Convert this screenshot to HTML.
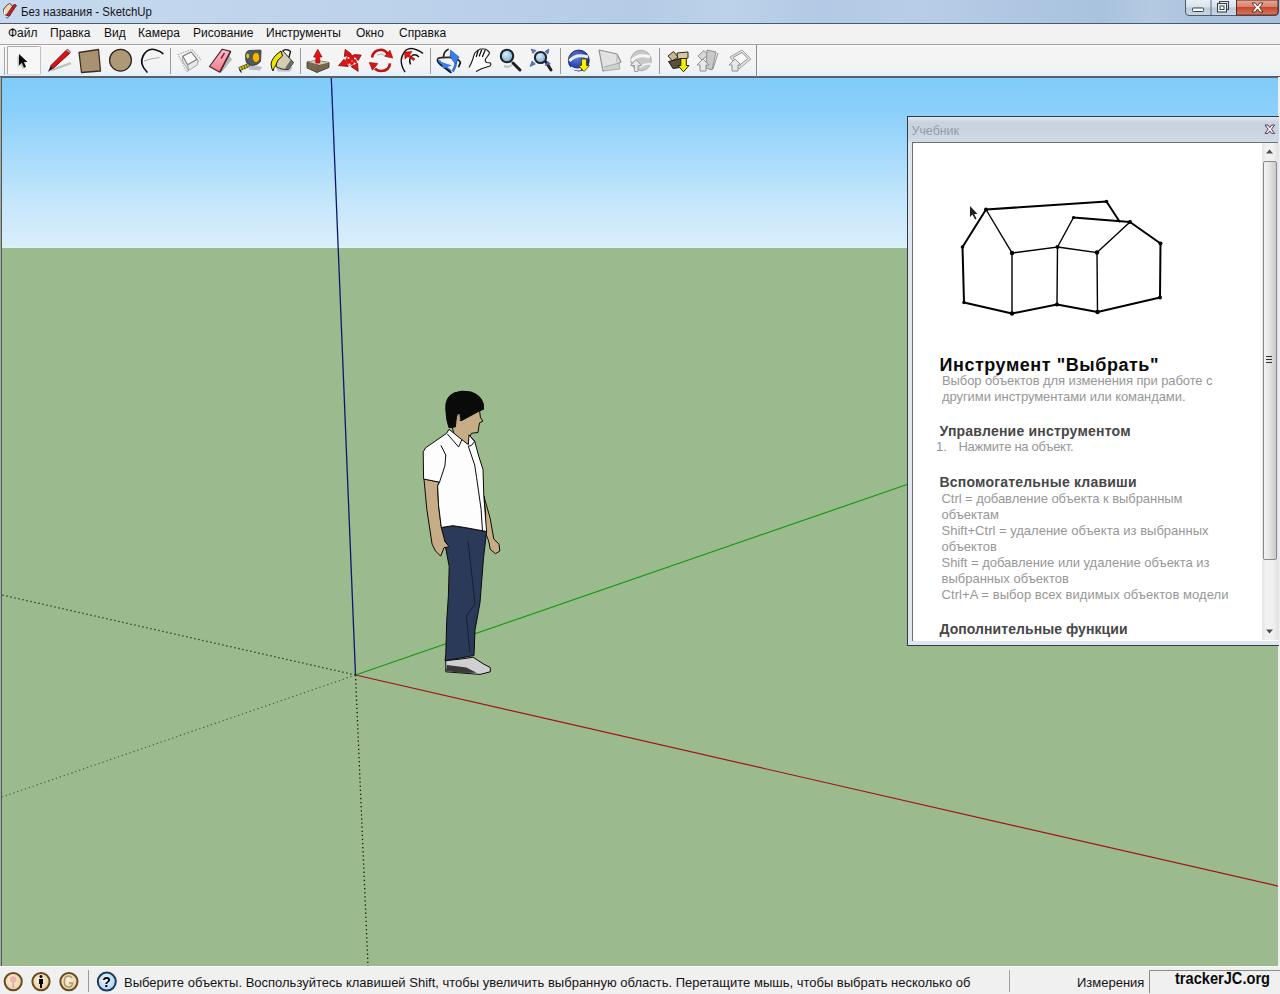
<!DOCTYPE html>
<html><head><meta charset="utf-8">
<style>
*{margin:0;padding:0;box-sizing:border-box}
html,body{width:1280px;height:994px;overflow:hidden;background:#f0f0f0;font-family:"Liberation Sans",sans-serif}
.abs{position:absolute}
svg{position:absolute;left:0;top:0;overflow:visible}
#title{left:0;top:0;width:1280px;height:24px;background:linear-gradient(90deg,#c6d9ee 0%,#c0d5ec 20%,#bad0ea 38%,#b4cce6 50%,#bcd2ea 57%,#b2cae5 64%,#b8cee8 72%,#aec6e2 80%,#a9c2de 86%,#b4cae2 90%,#aac2de 94%,#a8c0dc 100%);border-bottom:1px solid #4e5866}
#menu{left:0;top:24px;width:1280px;height:21px;background:#f2f2f2;border-bottom:1px solid #a3a3a3}
#menu span{position:absolute;top:2px;font-size:12px;color:#101010;white-space:nowrap}
#tb{left:0;top:45px;width:1280px;height:31px;background:linear-gradient(#fdfdfd 0px,#f4f4f4 2px,#f4f4f4 21px,#eef3f7 23px,#eef3f7 26px,#e6f1fa 28px,#e6f1fa 30px,#f2ede9 31px)}
#vpb{left:0;top:76px;width:1280px;height:891px;background:#56606c}
#sky{left:2px;top:78px;width:1276px;height:170px;background:linear-gradient(#7fcbfa 0%,#8bd0fb 20%,#a6dafb 45%,#c4e6fb 72%,#d4ecfb 92%,#d8eefa 98%,#dff4f6 100%)}
#ground{left:2px;top:248px;width:1276px;height:718px;background:#9bbb8e}
#vpl{left:0;top:77px;width:2px;height:890px;background:linear-gradient(90deg,#a4aaa4 0,#a4aaa4 1px,#505850 1px)}
#vpr{left:1278px;top:77px;width:2px;height:890px;background:#eef0f0}
#status{left:0;top:966px;width:1280px;height:28px;background:#f0f0f0;border-top:1px solid #fbfbfb}
#status .t{position:absolute;top:8px;font-size:13px;color:#141414;white-space:nowrap}
#panel{left:907px;top:116px;width:372px;height:530px;background:#cfd8e2;border:1px solid #34404c}
</style></head><body>
<div id="title" class="abs"></div>
<div id="menu" class="abs">
<span style="left:8px">Файл</span><span style="left:50px">Правка</span><span style="left:104px">Вид</span><span style="left:138px">Камера</span><span style="left:193px">Рисование</span><span style="left:266px">Инструменты</span><span style="left:356px">Окно</span><span style="left:399px">Справка</span>
</div>
<div id="tb" class="abs"></div>
<div id="vpb" class="abs"></div>
<div id="sky" class="abs"></div>
<div id="ground" class="abs"></div>
<div id="vpl" class="abs"></div>
<div id="vpr" class="abs"></div>
<div id="status" class="abs">
<span class="t" style="left:124px">Выберите объекты. Воспользуйтесь клавишей Shift, чтобы увеличить выбранную область. Перетащите мышь, чтобы выбрать несколько об</span>
<span class="t" style="left:1077px">Измерения</span>
</div>
<svg width="1280" height="80" viewBox="0 0 1280 80">
<defs>
<linearGradient id="gmin" x1="0" y1="0" x2="0" y2="1"><stop offset="0" stop-color="#e8eef6"/><stop offset="0.45" stop-color="#d8e2ee"/><stop offset="0.5" stop-color="#bccbdc"/><stop offset="1" stop-color="#c8d6e4"/></linearGradient>
<linearGradient id="gcls" x1="0" y1="0" x2="0" y2="1"><stop offset="0" stop-color="#e8a898"/><stop offset="0.45" stop-color="#d88070"/><stop offset="0.5" stop-color="#c44a2c"/><stop offset="1" stop-color="#d87860"/></linearGradient>
<linearGradient id="gthumb" x1="0" y1="0" x2="1" y2="0"><stop offset="0" stop-color="#f2f2f2"/><stop offset="0.5" stop-color="#e0e0e2"/><stop offset="1" stop-color="#c4c4c8"/></linearGradient>
</defs>
<!-- title icon -->
<path d="M3.5 9.5 Q6 5 9.5 3.5 Q11.5 4 12.5 6.5 L10 15.5 Q6.5 16 4.5 14.5 Q3 12 3.5 9.5 Z" fill="#f0d8b0" stroke="#303838" stroke-width="0.9"/>
<path d="M4.3 10.5 Q4 13 5 14.5" stroke="#fff" stroke-width="1.2" fill="none"/>
<path d="M15.5 4.5 L16.5 5.5 L9 16.5 L6.5 15 L13.5 4.8 Z" fill="#c02020" stroke="#601828" stroke-width="0.8"/>
<path d="M6 17.5 L8.5 18" stroke="#506070" stroke-width="1.2"/>
<text x="21" y="16" font-family="Liberation Sans" font-size="12" fill="#141420" textLength="131" lengthAdjust="spacingAndGlyphs">Без названия - SketchUp</text>
<!-- caption buttons -->
<path d="M1185.5 0 V12 Q1185.5 15.5 1189 15.5 H1275 Q1278.5 15.5 1278.5 12 V0" fill="url(#gmin)" stroke="#4c5a6a" stroke-width="1"/>
<path d="M1236.5 0 V15 H1275 Q1278 15 1278 12 V0 Z" fill="url(#gcls)" stroke="#5a2a20" stroke-width="1"/>
<line x1="1211" y1="0" x2="1211" y2="15" stroke="#5a6878" stroke-width="1"/>
<rect x="1192.5" y="8" width="11" height="3.5" rx="0.8" fill="#fff" stroke="#3a4450" stroke-width="1"/>
<path d="M1219.5 3.5 V1.5 H1228.5 V9.5 H1226.5" fill="none" stroke="#3a4450" stroke-width="1.1"/>
<rect x="1217.5" y="3.5" width="9" height="8.5" fill="#f4f6f8" stroke="#3a4450" stroke-width="1.1"/>
<rect x="1220" y="6" width="4" height="3.5" fill="none" stroke="#3a4450" stroke-width="1"/>
<path d="M1252 3 L1255.3 3 L1257.5 6 L1259.7 3 L1263 3 L1259.5 7.5 L1263 12 L1259.7 12 L1257.5 9 L1255.3 12 L1252 12 L1255.5 7.5 Z" fill="#fff" stroke="#4a2a28" stroke-width="0.9"/>
</svg>
<svg width="1280" height="80" viewBox="0 0 1280 80">
<defs>
<radialGradient id="glens" cx="0.4" cy="0.35" r="0.7"><stop offset="0" stop-color="#d8eefc"/><stop offset="1" stop-color="#7aa8cc"/></radialGradient>
<radialGradient id="gglobe" cx="0.4" cy="0.35" r="0.7"><stop offset="0" stop-color="#6080e0"/><stop offset="1" stop-color="#102090"/></radialGradient>
<linearGradient id="gbox" x1="0" y1="0" x2="0" y2="1"><stop offset="0" stop-color="#d8c8a0"/><stop offset="1" stop-color="#6a5e48"/></linearGradient>
</defs>
<!-- gripper + toolbar end -->
<line x1="4.5" y1="47" x2="4.5" y2="75" stroke="#a8a8a8" stroke-width="1"/>
<line x1="756.5" y1="45" x2="756.5" y2="77" stroke="#8a8a8a" stroke-width="1"/>
<line x1="757.5" y1="45" x2="757.5" y2="76" stroke="#f8f8f8" stroke-width="1"/>
<!-- selected button -->
<rect x="7.5" y="46.5" width="33" height="28" fill="#f7f7f7" stroke="none"/>
<path d="M7.5 74.5 V46.5 H37" fill="none" stroke="#a8a8a8" stroke-width="1"/>
<path d="M37 46.5 H40.5 V74.5" fill="none" stroke="#c0c0c0" stroke-width="1"/>
<path d="M8 74.5 H40" fill="none" stroke="#d8dde2" stroke-width="1"/>
<!-- separators -->
<g stroke="#9a9a9a" stroke-width="1">
<line x1="170.5" y1="48" x2="170.5" y2="74"/>
<line x1="300.5" y1="48" x2="300.5" y2="74"/>
<line x1="430.5" y1="48" x2="430.5" y2="74"/>
<line x1="560.5" y1="48" x2="560.5" y2="74"/>
<line x1="659.5" y1="48" x2="659.5" y2="74"/>
</g>
<!-- select arrow -->
<path d="M18.5 66 V54.5 L27 62.5 H23.5 L25.5 67 L23.5 68 L21.5 63.5 Z" fill="#c8c8c8" transform="translate(-1,1)"/>
<path d="M19 54 V65.5 L21.8 62.8 L24 67.8 L26 66.8 L23.8 62 H27.5 Z" fill="#0a0a0a"/>
<!-- pencil -->
<path d="M52 70 L70 63.5" stroke="#b8c0c0" stroke-width="2.2" stroke-linecap="round"/>
<path d="M48 72 L50.5 66 L53 68.5 Z" fill="#1a1a1a"/>
<path d="M50.5 66 L66 50.5 L69.5 53.5 L53 68.5 Z" fill="#e01010" stroke="#501010" stroke-width="0.9"/>
<path d="M66 50.5 L67.5 49 L70.5 52 L69.5 53.5 Z" fill="#e8a0b0" stroke="#603040" stroke-width="0.8"/>
<!-- rectangle -->
<path d="M79 52.5 L98.5 49.5 L100.5 71 L81.5 72.5 Z" fill="#a89272" stroke="#3a3020" stroke-width="1.3" stroke-linejoin="round"/>
<!-- circle -->
<circle cx="120.5" cy="60.2" r="10.9" fill="#ae9876" stroke="#2a2418" stroke-width="1.2"/>
<!-- arc -->
<path d="M159.5 57.5 Q150 58.5 144 61" stroke="#a8a8a8" stroke-width="1" fill="none"/>
<path d="M147 72 Q139 64 143 56 Q148 47 156 50 Q161 51.5 162.8 53.5" stroke="#101010" stroke-width="1.7" fill="none" stroke-linecap="round"/>
<!-- make component -->
<path d="M178.2 54.5 L191.8 49.3 L200.6 59.3 L186.7 71.7 Z" fill="#f2f2f2" stroke="#b4b4b4" stroke-width="1.2" stroke-dasharray="1.5 1"/>
<path d="M182.8 56.3 L191.2 52 L197 59.3 L198 64.5 L188.5 70.5 L182.5 61 Z" fill="#e8e8e8" stroke="#a8a8a8" stroke-width="1"/>
<path d="M182.8 56.3 L191.2 52 L197 59.3 L187.6 64.7 Z" fill="#fefefe" stroke="#7a7a7a" stroke-width="1.1" stroke-linejoin="round"/>
<path d="M187.6 64.7 L188.5 70.5" stroke="#9a9a9a" stroke-width="1"/>
<!-- eraser -->
<path d="M229 55 L232 59.5 L221.5 72.5 L219 72 Z" fill="#98a0a0" opacity="0.7"/>
<defs><linearGradient id="gers" x1="0" y1="0" x2="0" y2="1"><stop offset="0" stop-color="#f8c0cc"/><stop offset="1" stop-color="#f47888"/></linearGradient></defs>
<path d="M209.5 66.5 L222.2 49.2 L230.7 51.4 L219.8 72.3 Z" fill="url(#gers)" stroke="#4a2030" stroke-width="1.1" stroke-linejoin="round"/>
<path d="M230.2 52 L220 71.8" stroke="#5a2030" stroke-width="1.6"/>
<path d="M221 58.5 L224.5 53" stroke="#802040" stroke-width="1.4"/>
<!-- tape measure -->
<path d="M251 64.5 L262 67 L260 70.5 L248.5 69.5 Z" fill="#a8acb4" opacity="0.75"/>
<path d="M249 50.5 L260.5 50 Q261.5 50.5 261 52 L260.5 61.5 Q258 65.5 251.5 65.5 Q246.5 65 245.8 60 L245.5 55 Q246 51 249 50.5 Z" fill="#4c5a5a" stroke="#3a3048" stroke-width="0.8"/>
<path d="M247 53 Q245.5 57 247 62 L249 64" stroke="#5a3a78" stroke-width="1.5" fill="none" opacity="0.7"/>
<ellipse cx="256" cy="57.5" rx="3.7" ry="5" fill="#f8b400" stroke="#5a4a10" stroke-width="0.8"/>
<ellipse cx="247.7" cy="56" rx="1.5" ry="2.4" fill="#d8c820"/>
<path d="M238.8 67.5 L248.5 63.5 L249.5 66.5 L240 70.5 Z" fill="#e8d018" stroke="#2a2a10" stroke-width="0.7"/>
<g stroke="#2a2a10" stroke-width="0.8"><line x1="241.5" y1="66.5" x2="242.5" y2="69.5"/><line x1="244" y1="65.5" x2="245" y2="68.5"/><line x1="246.5" y1="64.5" x2="247.3" y2="67.5"/></g>
<path d="M239.5 69.5 L241.5 72.5" stroke="#1a1a30" stroke-width="1.3"/>
<!-- paint bucket -->
<path d="M276 68 L293 67 L290 71.5 L278 71.5 Z" fill="#a8a8b0" opacity="0.7"/>
<path d="M282.5 50.5 L293.5 62.5 L288.5 69.5 Q282 70 276.5 67 L275.5 60 Z" fill="#d4ceb0" stroke="#282828" stroke-width="1"/>
<path d="M293.5 62.5 L288.5 69.5 L285 68.5 L290.5 60 Z" fill="#6a6a6a"/>
<path d="M283 50.5 Q287.5 48.5 290.5 51.5 L289 57.5" stroke="#101010" stroke-width="1.3" fill="none"/>
<path d="M281 51 Q272 57 271 64 Q271.5 69 273 71 Q274 67 275.5 66 Q277 59 282.5 56 Z" fill="#f0e400" stroke="#141414" stroke-width="1"/>
<!-- push/pull -->
<path d="M307 62 L317 60.5 L329 62.5 L329 67.5 L317 72.5 L307 68 Z" fill="#75684e" stroke="#3a3428" stroke-width="0.8" stroke-linejoin="round"/>
<path d="M307 62 L317 60.5 L329 62.5 L318.5 65 Z" fill="#d6ccac"/>
<path d="M307 62 L318.5 65 L317 72.5" fill="none" stroke="#5a5040" stroke-width="0.6"/>
<path d="M317.8 49.3 L322 57 L319.8 57 L319.8 63 L315.8 63 L315.8 57 L313.5 57 Z" fill="#e81010" stroke="#700808" stroke-width="0.6"/>
<!-- move -->
<g fill="#e81010" stroke="#5a0808" stroke-width="0.7" stroke-linejoin="round">
<path d="M345.2 49.3 L351.5 54.2 L344.3 56.6 Z"/>
<path d="M361.2 55.1 L358.2 60.5 L354 54.5 Z"/>
<path d="M338.5 65.6 L344 59.3 L348.2 66.5 Z"/>
<path d="M358.2 71.4 L351 66.5 L357.6 63.2 Z"/>
</g>
<path d="M347.5 55 L355.5 55 L357 63 L349 66 L345 61 Z" fill="#e01010"/>
<circle cx="348.5" cy="58" r="1.1" fill="#fff"/><circle cx="355" cy="58.5" r="1.1" fill="#fff"/><circle cx="349.5" cy="64.5" r="1.1" fill="#fff"/><circle cx="354.5" cy="63.5" r="1" fill="#fff"/><circle cx="352" cy="61" r="0.8" fill="#f0c0c0"/>
<!-- rotate -->
<path d="M372 57.5 Q373.5 50 381 49.8 Q385 50 387.5 53.5" stroke="#c01010" stroke-width="2.6" fill="none"/>
<path d="M390 50.2 L384.8 56.3 L392.7 58.1 Z" fill="#e81010" stroke="#700808" stroke-width="0.6" stroke-linejoin="round"/>
<path d="M390 63.3 Q389.5 70.5 381 71 Q377 71 375 68.5" stroke="#c01010" stroke-width="2.6" fill="none"/>
<path d="M369.3 62.4 L377.8 63.6 L372.4 70.2 Z" fill="#e81010" stroke="#700808" stroke-width="0.6" stroke-linejoin="round"/>
<path d="M377 55 Q381 53 385 55.5" stroke="#a0a0a0" stroke-width="0.8" fill="none"/>
<!-- offset -->
<path d="M405 72 Q397 60 406 50 Q411 47 417 50 Q421 51.5 423 53.5" stroke="#101010" stroke-width="1.4" fill="none"/>
<path d="M410.5 64.5 Q408 58 413 55 Q416 54 419 57" stroke="#101010" stroke-width="1.4" fill="none"/>
<path d="M404.5 52 L412 51.5 L409.5 55 L415 59 L413.5 60.5 L408 56.5 L405 59 Z" fill="#e81010" stroke="#700808" stroke-width="0.5"/>
<!-- orbit -->
<path d="M438.5 60.5 Q440 64 444 66 L450.5 71.5" stroke="#3a7ce8" stroke-width="3.2" fill="none"/>
<path d="M456 58 Q456.5 66 452.5 71.5" stroke="#3a70d8" stroke-width="2.6" fill="none"/>
<g fill="none" stroke-linecap="round">
<path d="M448 49.5 Q444 51 443.5 57" stroke="#202020" stroke-width="1.8"/>
<path d="M438 58.5 Q441 57.3 452 57.5" stroke="#302828" stroke-width="1.8"/>
<path d="M437.5 59.5 Q437 62.5 441 65 L451 72.5" stroke="#181828" stroke-width="1.6"/>
<path d="M455.5 58.5 Q460.5 60.5 460.3 63 L458.8 66.5" stroke="#181820" stroke-width="1.8"/>
</g>
<path d="M441.5 62 L452 65.5 L443 68.5 Z" fill="#3a7ce8"/>
<path d="M450.5 50 L459 57 L455.5 64 L450 57 Z" fill="#3a7ce8" stroke="#1a3a90" stroke-width="0.5"/>
<!-- pan hand -->
<path d="M469 67.5 Q471.5 63 472.5 60 L474 55 Q475 52 476.5 51.5 L478.5 50 Q480 48.8 481.5 49 L484.5 49 Q486.5 49.2 487.5 50.5 L489.5 52.5 Q489.5 54 488 55.5 L485.5 59 Q484.5 61.5 486.5 62.5 L490.5 63 Q491.5 64.5 490 66 L482 68.5 L476 71.5" fill="#ffffff" stroke="#181818" stroke-width="1.1" stroke-linejoin="round"/>
<g stroke="#101010" stroke-width="1.3" stroke-linecap="round"><line x1="478" y1="51" x2="476.3" y2="56.5"/><line x1="481.5" y1="50.2" x2="479.3" y2="56"/><line x1="485" y1="50.5" x2="482.5" y2="56.5"/></g>
<!-- zoom -->
<path d="M504 66 Q508 68 512 65" stroke="#c0c0c0" stroke-width="2" fill="none"/>
<line x1="513" y1="63" x2="520" y2="70" stroke="#202020" stroke-width="3" stroke-linecap="round"/>
<circle cx="507" cy="56" r="6.2" fill="url(#glens)" stroke="#1a242c" stroke-width="2.1"/>
<!-- zoom extents -->
<line x1="546" y1="62" x2="551" y2="70" stroke="#202020" stroke-width="3" stroke-linecap="round"/>
<circle cx="540.5" cy="57.5" r="5.6" fill="url(#glens)" stroke="#1a242c" stroke-width="2"/>
<g fill="#5078d0" stroke="#304080" stroke-width="0.5">
<path d="M531 49 L536 50.5 L533 53.5 Z"/>
<path d="M549 49 L548 54 L545 51.5 Z"/>
<path d="M530 66.5 L532 61 L535.5 64 Z"/>
<path d="M550.5 64 L545 65.5 L548 61.5 Z"/>
</g>
<!-- google earth get view -->
<circle cx="578.8" cy="60.5" r="10.5" fill="url(#gglobe)" stroke="#1a2040" stroke-width="0.8"/>
<path d="M569.5 61 Q576 53 588 57" stroke="#e8eef8" stroke-width="3" fill="none"/>
<path d="M570.5 67.5 Q576 70.5 581 69" stroke="#e8eef8" stroke-width="2.2" fill="none"/>
<path d="M581.5 59 L586.5 59 L586.5 65.5 L589.5 65.5 L584 71.5 L578.5 65.5 L581.5 65.5 Z" fill="#f8f000" stroke="#404000" stroke-width="0.8"/>
<!-- toggle terrain (gray) -->
<path d="M599 50 L617 54 L621 62 L603 71 Z" fill="#e2e2e2" stroke="#909090" stroke-width="1.2" stroke-linejoin="round"/>
<path d="M617 54 L617 62" stroke="#b0b0b0" stroke-width="1"/>
<path d="M604 67 L619 63 L620 69 L604 71" fill="#d0d0d0" stroke="#a0a0a0" stroke-width="0.8"/>
<!-- place model (gray globe) -->
<circle cx="641" cy="60.5" r="10.3" fill="#c8c8c8" stroke="#a0a0a0" stroke-width="0.8"/>
<path d="M631.5 61 Q638 53 650 57" stroke="#f6f6f6" stroke-width="3" fill="none"/>
<path d="M640 67 Q645 63 651 64" stroke="#f2f2f2" stroke-width="1.8" fill="none"/>
<path d="M634.5 71.5 V65.5 H630.5 L636 59.5 L641.5 65.5 H638 V71.5 Z" fill="#e8e8e8" stroke="#a0a0a0" stroke-width="1"/>
<!-- get models -->
<path d="M668 56 L673.5 51.5 L678 57 L672.5 61 Z" fill="#c8b890" stroke="#302820" stroke-width="1"/>
<path d="M677 53 L688 52 L688 58 L678 60 Z" fill="#d8c8a0" stroke="#302820" stroke-width="1"/>
<path d="M668.5 61.5 L681 58.5 L683 67 L673 68.5 Z" fill="#5a5038" stroke="#181810" stroke-width="1"/>
<path d="M680.8 58.5 L686.3 58.5 L686.3 65.5 L689 65.5 L683.5 71.8 L678 65.5 L680.8 65.5 Z" fill="#f4f000" stroke="#202010" stroke-width="1"/>
<!-- share model (gray) -->
<g fill="#d8d8d8" stroke="#909090" stroke-width="1" stroke-linejoin="round">
<path d="M698 56 L704 50.5 L708 55 L702 60 Z"/>
<path d="M707 50 L716 52 L712 70 L706 68 Z" fill="#c8c8c8"/>
<path d="M718 53 L713 69" fill="none"/>
<path d="M700 71 V65 H697 L703 59 L709 65 H706 V71 Z" fill="#e8e8e8"/>
</g>
<!-- share component (gray) -->
<g fill="#f4f4f4" stroke="#a0a0a0" stroke-width="1" stroke-linejoin="round">
<path d="M730 57 L742 50 L751 59 L739 69 Z" fill="#e4e4e4"/>
<path d="M733 57.5 L742 52.5 L748 58.5 L739 65.5 Z" fill="#fafafa" stroke="#909090"/>
<path d="M732 71 V65 H729 L735 59 L741 65 H738 V71 Z" fill="#e8e8e8" stroke="#909090"/>
</g>
</svg>
<svg width="1280" height="994" viewBox="0 0 1280 994">
<defs><clipPath id="vpclip"><rect x="2" y="78" width="1276" height="888"/></clipPath></defs>
<g clip-path="url(#vpclip)">
<!-- dotted axes -->
<line x1="355.5" y1="675" x2="2" y2="595" stroke="#203018" stroke-width="1.3" stroke-dasharray="1.3 2.8"/>
<line x1="355.5" y1="675" x2="2" y2="797" stroke="#3a6a38" stroke-width="1.2" stroke-dasharray="1.3 2.8"/>
<line x1="355.5" y1="675" x2="368" y2="966" stroke="#101810" stroke-width="1.3" stroke-dasharray="1.3 2.8"/>
<!-- solid axes -->
<line x1="355.5" y1="675" x2="1280" y2="886.5" stroke="#a01414" stroke-width="1.2"/>
<line x1="355.5" y1="675" x2="910" y2="483.5" stroke="#169a16" stroke-width="1.2"/>
<line x1="331.3" y1="78" x2="355.5" y2="675" stroke="#0c1670" stroke-width="1.3"/>
</g>
<!-- person -->
<g stroke="#0a0a0a" stroke-width="1" stroke-linejoin="round">
<!-- right arm/hand (far) -->
<path d="M483.8 495.8 L490.2 518.4 L493.8 539 L499 544.2 L499.8 551 L495.5 553.7 L490.3 549.4 L488.6 540.8 L485.2 532 L485.7 513.9 Z" fill="#c6ad86"/>
<!-- pants -->
<path d="M441.3 527.5 L453 525.7 L464.8 527.5 L486.6 531.5 L483.5 558 L480 602.5 L475 629.9 L474 655.5 L445 660.7 L445.8 653.8 L446.7 621.3 L448.4 595.6 L449.2 566.5 L445 544.2 Z" fill="#2b3a58"/>
<path d="M468 540.8 L475 604 L466.4 616 L469.8 652" fill="none" stroke="#101828" stroke-width="0.8"/>
<!-- left arm -->
<path d="M424 479 L426.8 509.3 L432.1 544.2 L435.5 551 L440.7 556.2 L444 547.7 L449.2 546.8 L445 541.7 L441.3 527.5 L438.6 505.7 L437.6 485.8 L439.5 482.2 Z" fill="#c6ad86"/>
<!-- shoes -->
<path d="M445.8 660.7 L461 659 L473.2 657.3 L483.5 664 L490.3 667.5 L490.3 671.8 L480 674.4 L445.8 671.8 Z" fill="#d0d0d2"/>
<path d="M447 665 L466.4 667.5 L476.6 672.7 L462 673 L446 671 Z" fill="#3a3a3a" stroke="none"/>
<!-- neck/face -->
<path d="M458 412 L479.6 410.8 L480.4 417.2 L482.8 421.2 L479.6 422.8 L478.8 426.8 L478 432.5 L471.5 433.3 L469.9 436.5 L468.3 444.6 L456 440 L452 427 Z" fill="#c6ad86"/>
<!-- shirt -->
<path d="M449 429.3 L446.6 433.3 L425.6 447.8 L423.2 451.8 L423.6 479 L439.5 482.2 L437.6 485.8 L438.6 505.7 L441.3 527.5 L453 525.7 L464.8 527.5 L486.6 531.5 L483.8 495.8 L483 469.5 L478.4 455 L474.7 441.3 L469 434.9 L468.3 444.6 L461.9 439.7 Z" fill="#fdfdfd"/>
<path d="M447.4 434 L458.6 447 L461.9 439.7" fill="none"/>
<path d="M469 434.9 L474.7 441.3 L471.5 445.4 L468.3 446.2" fill="none"/>
<path d="M468.3 446.2 L474.7 465 L476.6 477.6 L481.1 509.3 L482.5 531.5" fill="none"/>
<path d="M440.9 445.4 L445.8 455 L444.9 465.9 L439.5 482.2" fill="none"/>
<!-- hair -->
<path d="M445.8 409 Q445 397 454 393 Q462 389.8 471 392 Q481 395 483.3 404 L483.6 409.3 L479.6 410.8 L461.9 420.4 L460 420.6 L458.5 414.5 L456.5 416 L455.4 426.9 L449 427.7 Q446 420 445.8 409 Z" fill="#0a0a0a"/>
<path d="M457.5 414.5 L459.5 414 L460.5 420 L458 420.5 Z" fill="#b0987a" stroke="none"/>
</g>
</svg>
<div class="abs" style="left:907px;top:116px;width:372px;height:530px;background:linear-gradient(#dfe6ee 0,#c9d3dd 6px,#c6d4de 12px,#cfdae6 24px,#dfe6ee 26px,#dfe6ee 100%);border:1px solid #303c48;border-right:none"></div>
<div class="abs" style="left:912px;top:142px;width:366px;height:499px;background:#fff;border-left:1px solid #707070;border-top:1px solid #707070"></div>
<div class="abs" style="left:1262px;top:143px;width:16px;height:497px;background:linear-gradient(90deg,#e6e6e6,#f2f2f2 30%,#f0f0f0 70%,#e2e2e2)"></div>
<svg width="1280" height="994" viewBox="0 0 1280 994">
<defs>
<linearGradient id="gth" x1="0" y1="0" x2="1" y2="0"><stop offset="0" stop-color="#f4f4f2"/><stop offset="0.45" stop-color="#e6e6e8"/><stop offset="1" stop-color="#c6c6ca"/></linearGradient>
</defs>
<text x="911.5" y="135" font-family="Liberation Sans" font-size="12" fill="#969ca4" textLength="47.5" lengthAdjust="spacingAndGlyphs">Учебник</text>
<path d="M1265 125 L1268 125 L1269.8 127.5 L1271.6 125 L1274.6 125 L1271.5 129.2 L1274.6 133.4 L1271.6 133.4 L1269.8 130.9 L1268 133.4 L1265 133.4 L1268.1 129.2 Z" fill="#faf0fa" stroke="#402848" stroke-width="0.9"/>
<!-- scrollbar -->
<path d="M1266 153.5 L1273 153.5 L1269.5 149.5 Z" fill="#505050"/>
<rect x="1263.5" y="161.5" width="13" height="398" rx="1.5" fill="url(#gth)" stroke="#8a8a8a" stroke-width="1"/>
<g stroke="#303030" stroke-width="1"><line x1="1266" y1="356.5" x2="1272" y2="356.5"/><line x1="1266" y1="359.5" x2="1272" y2="359.5"/><line x1="1266" y1="362.5" x2="1272" y2="362.5"/></g>
<path d="M1266 629.5 L1273 629.5 L1269.5 633.5 Z" fill="#505050"/>
<!-- house drawing -->
<g fill="none" stroke="#000" stroke-width="2" stroke-linejoin="round" stroke-linecap="round">
<path d="M986 209.5 L1106.5 201.5 L1119.5 221.5"/>
<path d="M986 209.5 L962.5 247 L964 302.5 L1012 313.5 L1057 304.5 L1097.5 312 L1160 297.5 L1160.5 243.5 L1130 222 L1073.5 217.5"/>
</g>
<g fill="none" stroke="#000" stroke-width="1.4" stroke-linecap="round">
<path d="M986 209.5 L1012 253 L1012 313.5"/>
<path d="M1012 253 L1057.5 247 L1057 304.5"/>
<path d="M1057.5 247 L1097 252.5 L1097.5 312"/>
<path d="M1097 252.5 L1130 222"/>
<path d="M1073.5 217.5 L1057.5 247"/>
</g>
<g fill="#000">
<circle cx="986" cy="209.5" r="2"/><circle cx="1106.5" cy="201.5" r="1.8"/><circle cx="962.5" cy="247" r="1.8"/><circle cx="964" cy="302.5" r="1.8"/>
<circle cx="1012" cy="253" r="2.2"/><circle cx="1012" cy="313.5" r="2.2"/><circle cx="1057.5" cy="247" r="2"/><circle cx="1057" cy="304.5" r="2"/>
<circle cx="1073.5" cy="217.5" r="1.6"/><circle cx="1130" cy="222" r="2"/><circle cx="1097" cy="252.5" r="2.2"/><circle cx="1097.5" cy="312" r="2.2"/>
<circle cx="1160.5" cy="243.5" r="2"/><circle cx="1160" cy="297.5" r="2"/>
</g>
<path d="M970 206 L970 217 L972.5 214.5 L975 219.5 L976.5 218.8 L974.2 214 L977.5 214 Z" fill="#202020"/>
<!-- text -->
<g font-family="Liberation Sans">
<text x="939.5" y="370.6" font-size="18" font-weight="700" fill="#0a0a0a" textLength="219" lengthAdjust="spacing">Инструмент "Выбрать"</text>
<g font-size="13" fill="#979797">
<text x="942" y="384.7" textLength="270.5" lengthAdjust="spacing">Выбор объектов для изменения при работе с</text>
<text x="942" y="400.5" textLength="243.5" lengthAdjust="spacing">другими инструментами или командами.</text>
<text x="936" y="451.4">1.</text>
<text x="958.5" y="451.4" textLength="115" lengthAdjust="spacing">Нажмите на объект.</text>
<text x="941.5" y="503.2" textLength="241" lengthAdjust="spacing">Ctrl = добавление объекта к выбранным</text>
<text x="941.5" y="519">объектам</text>
<text x="941.5" y="535" textLength="267" lengthAdjust="spacing">Shift+Ctrl = удаление объекта из выбранных</text>
<text x="941.5" y="551">объектов</text>
<text x="941.5" y="567" textLength="268" lengthAdjust="spacing">Shift = добавление или удаление объекта из</text>
<text x="941.5" y="583">выбранных объектов</text>
<text x="941.5" y="599" textLength="287" lengthAdjust="spacing">Ctrl+A = выбор всех видимых объектов модели</text>
</g>
<g font-size="14" font-weight="700" fill="#474747">
<text x="939.5" y="435.6" textLength="191" lengthAdjust="spacing">Управление инструментом</text>
<text x="939.5" y="487.2" textLength="197" lengthAdjust="spacing">Вспомогательные клавиши</text>
<text x="939.5" y="634.4" textLength="188" lengthAdjust="spacing">Дополнительные функции</text>
</g>
</g>
</svg>
<svg width="1280" height="994" viewBox="0 0 1280 994">
<defs>
<radialGradient id="gst" cx="0.45" cy="0.4" r="0.6"><stop offset="0" stop-color="#fbf0d8"/><stop offset="1" stop-color="#e8d0a0"/></radialGradient>
<radialGradient id="ghelp" cx="0.45" cy="0.4" r="0.6"><stop offset="0" stop-color="#f4faff"/><stop offset="1" stop-color="#a8d0f0"/></radialGradient>
</defs>
<circle cx="13.2" cy="981.6" r="8.6" fill="url(#gst)" stroke="#6a4a20" stroke-width="2"/>
<circle cx="13.2" cy="979.5" r="3.2" fill="#f0b0b0"/><line x1="13.2" y1="982" x2="13.2" y2="988" stroke="#b0b0a0" stroke-width="1.2"/>
<circle cx="41" cy="981.6" r="8.6" fill="url(#gst)" stroke="#6a4a20" stroke-width="2"/>
<circle cx="41" cy="976.5" r="1.5" fill="#000"/><path d="M39 979 H43 V984 H42 V988 H40 V984 H39 Z" fill="#000"/>
<circle cx="68.9" cy="981.6" r="8.6" fill="url(#gst)" stroke="#6a4a20" stroke-width="2"/>
<path d="M72 977.8 Q70.5 976 68.5 976 Q64.3 976 64.3 981.5 Q64.3 987 68.5 987 Q72.5 987 72.5 983 H69" fill="none" stroke="#a89878" stroke-width="1.5"/>
<line x1="88.5" y1="970" x2="88.5" y2="992" stroke="#9a9a9a" stroke-width="1"/>
<circle cx="106.8" cy="981.6" r="9" fill="url(#ghelp)" stroke="#1a3a58" stroke-width="2"/>
<text x="102.3" y="987" font-family="Liberation Sans" font-size="14" font-weight="700" fill="#000">?</text>
<line x1="1009.5" y1="970" x2="1009.5" y2="992" stroke="#a0a0a0" stroke-width="1"/>
<path d="M1149.5 993 V970.5 H1280" fill="none" stroke="#8a8a8a" stroke-width="1"/>
<text x="1175" y="984" font-family="Liberation Sans" font-size="17" font-weight="700" fill="#0a0a0a" textLength="95" lengthAdjust="spacingAndGlyphs">trackerJC.org</text>
</svg>
</body></html>
